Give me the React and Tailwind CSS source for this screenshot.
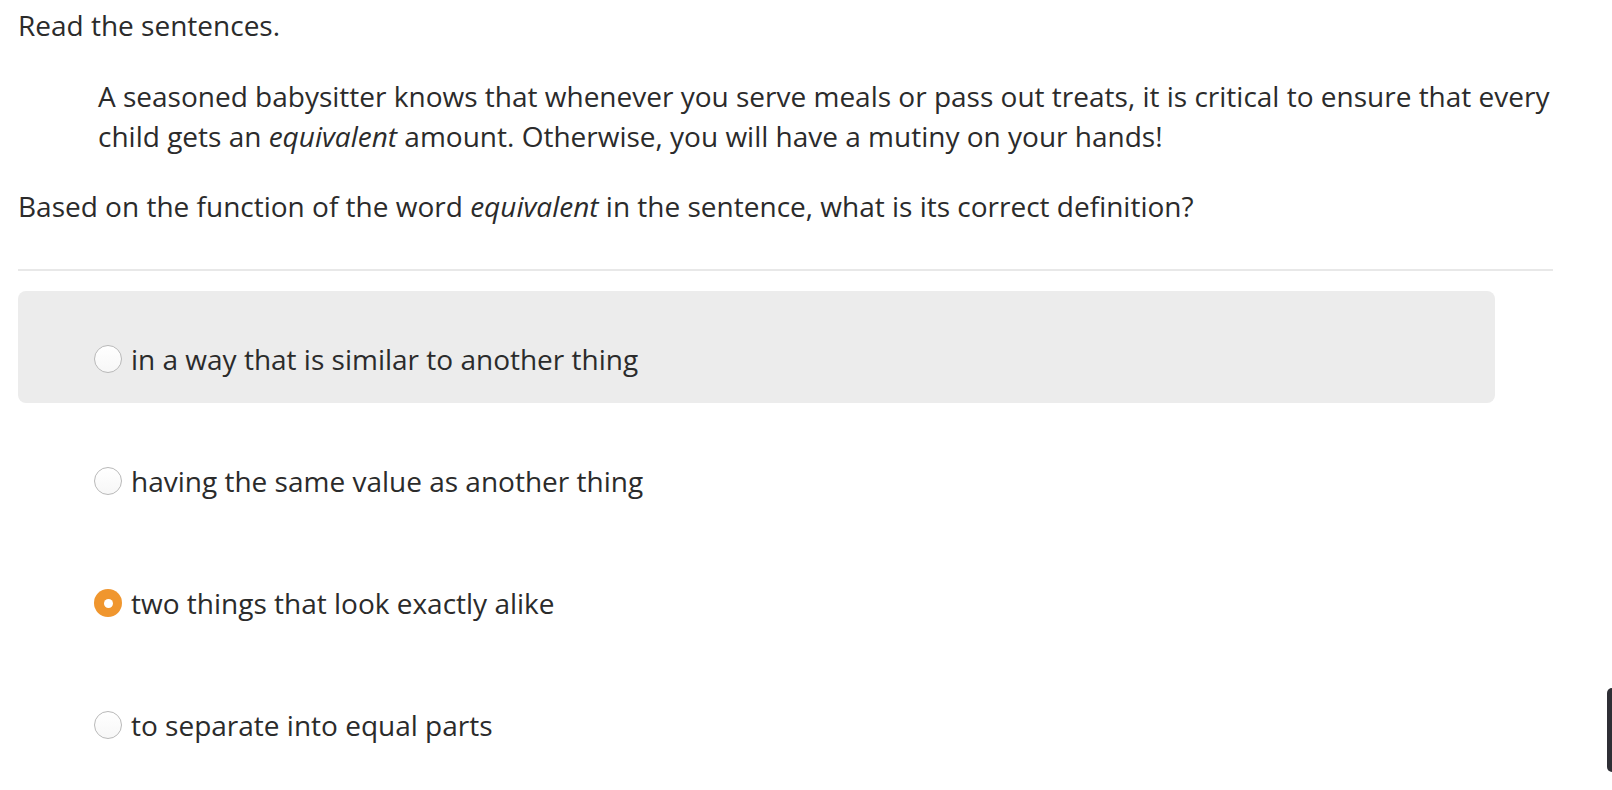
import React from 'react'

const options = [
  { id: 'a', label: 'in a way that is similar to another thing', hover: true },
  { id: 'b', label: 'having the same value as another thing' },
  { id: 'c', label: 'two things that look exactly alike', checked: true },
  { id: 'd', label: 'to separate into equal parts' },
]

const Radio = ({ checked }) => {
  if (checked) {
    return (
      <span className="flex items-center justify-center w-[28px] h-[28px] rounded-full bg-[#f0962e] shrink-0">
        <span className="w-[9px] h-[9px] rounded-full bg-white"></span>
      </span>
    )
  }
  return (
    <span className="w-[28px] h-[28px] rounded-full border-[1.5px] border-[#b9b9b9] bg-gradient-to-b from-white to-[#f7f7f7] shrink-0"></span>
  )
}

const App = () => {
  return (
    <div className="relative min-h-screen bg-white font-['Open_Sans',sans-serif] text-[28px] leading-[40px] text-[#2b2b2b]">
      <div className="w-[1535px] ml-[18px] pt-[5px]">
        <p>Read the sentences.</p>
        <p className="mt-[31px] ml-[80px]">
          A seasoned babysitter knows that whenever you serve meals or pass out treats, it is critical to ensure that every
          child gets an <em>equivalent</em> amount. Otherwise, you will have a mutiny on your hands!
        </p>
        <p className="mt-[30px]">
          Based on the function of the word <em>equivalent</em> in the sentence, what is its correct definition?
        </p>

        <div className="mt-[43px] h-[2px] bg-[#e8e8e8]"></div>

        {/* Answer choices */}
        <div className="mt-[20px] w-[1477px] flex flex-col gap-[10px]">
          {options.map((o) => (
            <label
              key={o.id}
              className={`flex items-center gap-[9px] h-[112px] pt-[48px] pb-[24px] pl-[76px] rounded-[8px] cursor-pointer ${o.hover ? 'bg-[#ececec]' : ''}`}
            >
              <Radio checked={o.checked} />
              <span>{o.label}</span>
            </label>
          ))}
        </div>
      </div>

      {/* side widget tab */}
      <div className="absolute right-0 top-[688px] w-[5px] h-[84px] rounded-l-[6px] bg-[#2e2f35]"></div>
    </div>
  )
}

export default App
